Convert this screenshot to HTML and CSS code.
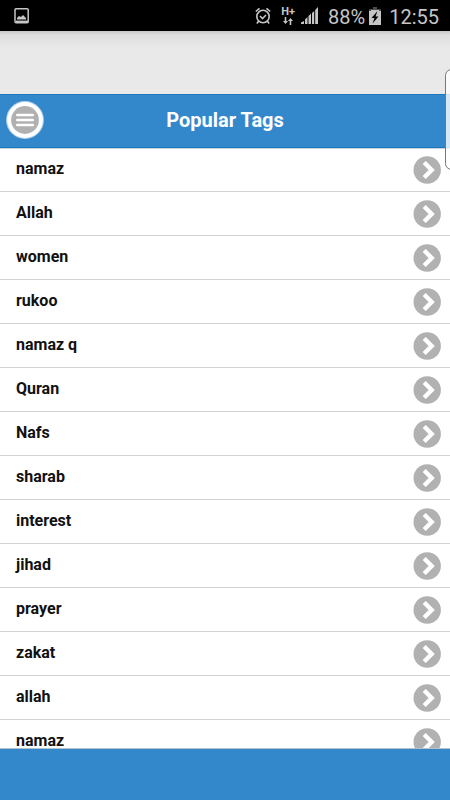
FILE: index.html
```html
<!DOCTYPE html>
<html lang="en">
<head>
<meta charset="utf-8">
<meta name="viewport" content="width=device-width, initial-scale=1">
<title>Popular Tags</title>
<link rel="stylesheet" href="styles.css">
</head>
<body>
<svg class="defs" aria-hidden="true">
  <symbol id="go" viewBox="0 0 28 28">
    <circle cx="14.200" cy="14" r="13.7" fill="#b1b1b1"/>
    <path d="M11.200 6.500 18.700 14 11.200 21.500" fill="none" stroke="#fff" stroke-width="4.400"/>
  </symbol>
</svg>
<div class="status">
  <svg class="picture" viewBox="0 0 16 16" width="16" height="16" aria-hidden="true">
    <rect x="1" y="0.800" width="13.200" height="14" rx="1" fill="none" stroke="#c6c6c6" stroke-width="1.500"/>
    <path d="M2 13.600h12" stroke="#c6c6c6" stroke-width="2"/>
    <path d="M3 11.500V10l2-2 2 1L9 7l3 3v1.500z" fill="#c6c6c6"/>
  </svg>
  <svg class="alarm" viewBox="0 0 16 18" width="16" height="18" aria-hidden="true">
    <g fill="none" stroke="#c6c6c6" stroke-width="1.600">
      <circle cx="8" cy="9.500" r="6.200"/>
      <path d="M5 9l2.500 2.500L11 8M0.800 4.500 4.500 1.300M15.200 4.500 11.500 1.300M3.800 14 1.800 16.500M12.200 14 14.200 16.500"/>
    </g>
  </svg>
  <div class="network">
    <span>H+</span>
    <svg viewBox="0 0 10 8" width="10" height="8" aria-hidden="true">
      <path d="M2.500 0v5M7.500 8V3" stroke="#c6c6c6" stroke-width="1.600"/>
      <path d="M0 4h5L2.500 7zM5 4h5L7.500 1z" fill="#c6c6c6"/>
    </svg>
  </div>
  <svg class="signal" viewBox="0 0 17 17" width="17" height="17" aria-hidden="true">
    <path d="M0 17v-1.500L3 14v3zM4 17v-4.500L6.500 10v7zM7.500 17V9l2.500-2.500V17zM11 17V6L13.200 4v13zM14.200 17V3L17 0v17z" fill="#c6c6c6"/>
  </svg>
  <span class="percent">88%</span>
  <svg class="battery" viewBox="0 0 12 18" width="12" height="18" aria-hidden="true">
    <path d="M4 0h4v2h4v4H0V2h4z" fill="#4b4b4b"/>
    <path d="M0 4h2V3h8v1h2v14H0z" fill="#c6c6c6"/>
    <path d="M8.500 4 2.500 11h3L3.500 16.500 9.500 9.500h-3z" fill="#000"/>
  </svg>
  <time class="clock">12:55</time>
</div>
<div class="banner"></div>
<header class="header">
  <button class="menu" type="button" aria-label="Menu">
    <svg viewBox="0 0 38 38" width="38" height="38" aria-hidden="true">
      <circle cx="19" cy="19" r="18.900" fill="#b9d1e5"/>
      <circle cx="19" cy="19" r="17.900" fill="#fff"/>
      <circle cx="19" cy="19" r="13.900" fill="#b1b1b1"/>
      <path d="M11.200 14h15.600M11.200 19h15.600M11.200 24h15.600" stroke="#fff" stroke-width="2.400" stroke-linecap="round"/>
    </svg>
  </button>
  <h1>Popular Tags</h1>
</header>
<main class="list">
  <ul>
    <li><a href="#">namaz<svg aria-hidden="true"><use href="#go"/></svg></a></li>
    <li><a href="#">Allah<svg aria-hidden="true"><use href="#go"/></svg></a></li>
    <li><a href="#">women<svg aria-hidden="true"><use href="#go"/></svg></a></li>
    <li><a href="#">rukoo<svg aria-hidden="true"><use href="#go"/></svg></a></li>
    <li><a href="#">namaz q<svg aria-hidden="true"><use href="#go"/></svg></a></li>
    <li><a href="#">Quran<svg aria-hidden="true"><use href="#go"/></svg></a></li>
    <li><a href="#">Nafs<svg aria-hidden="true"><use href="#go"/></svg></a></li>
    <li><a href="#">sharab<svg aria-hidden="true"><use href="#go"/></svg></a></li>
    <li><a href="#">interest<svg aria-hidden="true"><use href="#go"/></svg></a></li>
    <li><a href="#">jihad<svg aria-hidden="true"><use href="#go"/></svg></a></li>
    <li><a href="#">prayer<svg aria-hidden="true"><use href="#go"/></svg></a></li>
    <li><a href="#">zakat<svg aria-hidden="true"><use href="#go"/></svg></a></li>
    <li><a href="#">allah<svg aria-hidden="true"><use href="#go"/></svg></a></li>
    <li><a href="#">namaz<svg aria-hidden="true"><use href="#go"/></svg></a></li>
  </ul>
</main>
<footer class="footer"></footer>
<div class="edge-handle"></div>
</body>
</html>
```
FILE: styles.css
```css
* {
  box-sizing: border-box;
}

body {
  margin: 0;
  height: 100vh;
  display: flex;
  flex-direction: column;
  position: relative;
  overflow: hidden;
  background: #fff;
  color: #111;
  font-family: Roboto, sans-serif;
}

svg {
  display: block;
  flex: none;
}

.defs {
  position: absolute;
  width: 0;
  height: 0;
}

.status {
  flex: none;
  display: flex;
  align-items: center;
  height: 31px;
  padding: 0 11px 0 14px;
  background: #000;
  color: #c6c6c6;
  font-size: 20px;
  line-height: 28px;
}

.picture {
  margin-right: auto;
}

.network {
  width: 14px;
  margin: 0 6px 0 10px;
  display: flex;
  flex-direction: column;
  align-items: center;
  font-size: 11px;
  font-weight: 700;
  line-height: 10px;
}

.percent {
  margin: 0 4px 0 10px;
  padding-top: 2px;
}

.clock {
  margin-left: 8px;
  padding-top: 2px;
}

.banner {
  flex: none;
  height: 63px;
  background: linear-gradient(#c8c8c8, #dedede 4px, #e9e9e9 18px);
}

.header {
  flex: none;
  display: grid;
  grid-template-columns: 38px 1fr 38px;
  align-items: center;
  height: 54px;
  padding: 0 6px 2px;
  background: #3388cc;
  border-top: 1px solid #1c78bd;
  border-bottom: 1px solid #1c78bd;
  box-shadow: 0 1px 0 #c3d3e2;
  position: relative;
}

.menu {
  width: 38px;
  height: 38px;
  padding: 0;
  border: 0;
  background: none;
}

h1 {
  margin: 0;
  color: #fff;
  font-size: 20px;
  font-weight: 700;
  line-height: 26px;
  text-align: center;
}

.list {
  flex: 1;
  min-height: 0;
  overflow: hidden;
}

ul {
  margin: 0;
  padding: 0;
  list-style: none;
}

li a {
  display: flex;
  align-items: center;
  justify-content: space-between;
  height: 44px;
  padding: 0 9px 2px 16px;
  border-bottom: 1px solid #d3d3d3;
  color: inherit;
  font-size: 16px;
  font-weight: 700;
  line-height: 20px;
  text-decoration: none;
}

li svg {
  width: 28px;
  height: 28px;
  margin-top: 2px;
}

.footer {
  flex: none;
  height: 52px;
  background: #3388cc;
  border-top: 1px solid #b5c3cf;
}

/* Translucent pull tab resting over the right edge of the screen. */
.edge-handle {
  position: absolute;
  top: 69px;
  right: -8px;
  width: 13px;
  height: 101px;
  border: 1px solid #777;
  border-radius: 8px;
  background: rgba(255, 255, 255, 0.8);
}
```
